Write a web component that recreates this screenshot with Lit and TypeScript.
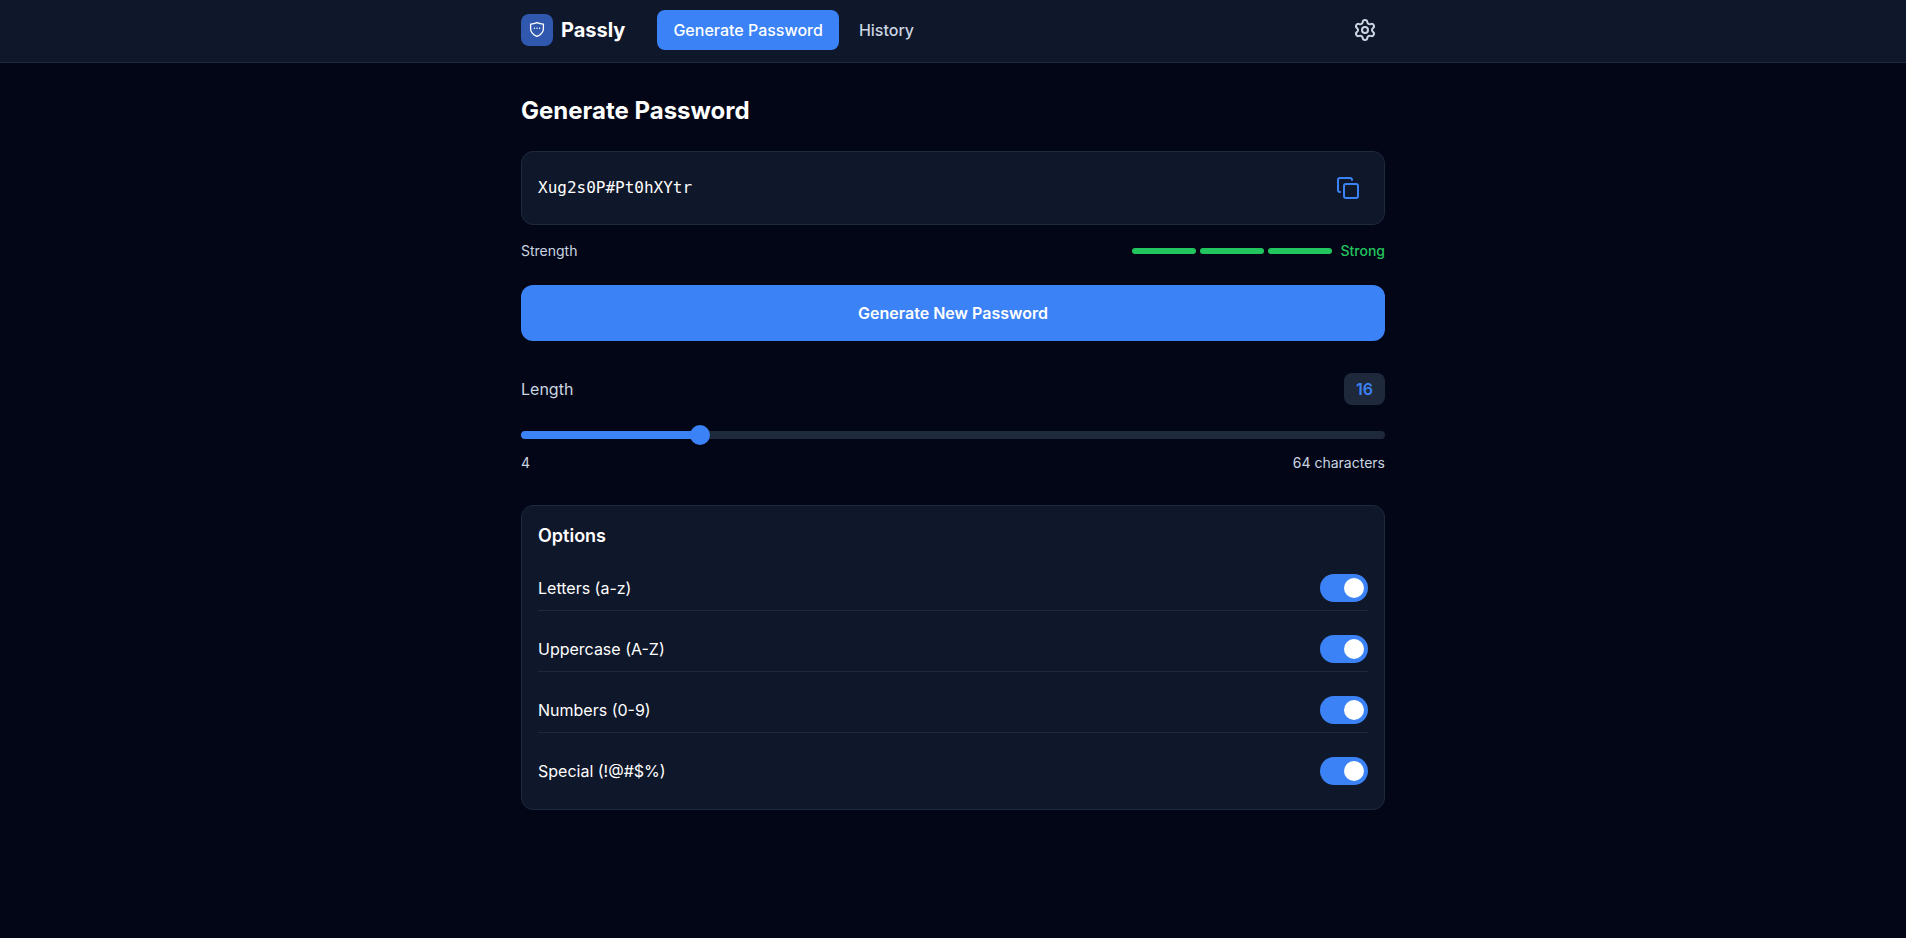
import { LitElement, html, css } from "lit";
import { customElement, state } from "lit/decorators.js";
import { classMap } from "lit/directives/class-map.js";
import { styleMap } from "lit/directives/style-map.js";

interface CharOption {
  id: string;
  label: string;
  on: boolean;
}

@customElement("app-root")
export class AppRoot extends LitElement {
  static styles = css`
    :host {
      display: block;
      min-height: 100vh;
      background: #020617;
      color: #ffffff;
      font-family: Inter, sans-serif;
      font-size: 16px;
      line-height: 24px;
    }
    * {
      box-sizing: border-box;
    }
    h1,
    h2 {
      margin: 0;
    }
    button {
      font: inherit;
      border: 0;
      cursor: pointer;
    }
    .bar {
      background: #0f172a;
      border-bottom: 1px solid #1e293b;
    }
    .wrap {
      max-width: 896px;
      margin: 0 auto;
      padding: 0 16px;
    }
    .bar-row {
      display: flex;
      align-items: center;
      justify-content: space-between;
      padding-top: 10px;
      padding-bottom: 12px;
    }
    .left {
      display: flex;
      align-items: center;
      gap: 32px;
    }
    .brand {
      display: flex;
      align-items: center;
      gap: 8px;
      font-size: 20px;
      line-height: 28px;
      font-weight: 700;
      color: inherit;
      text-decoration: none;
    }
    .logo {
      display: block;
      width: 32px;
      height: 32px;
    }
    .nav {
      display: flex;
      gap: 4px;
    }
    .tab {
      padding: 8px 16px;
      border-radius: 8px;
      font-weight: 500;
      color: #cbd5e1;
      text-decoration: none;
    }
    .tab.active {
      background: #3b82f6;
      color: #ffffff;
    }
    .icon-btn {
      display: flex;
      padding: 8px;
      border-radius: 8px;
      background: transparent;
      color: #cbd5e1;
    }
    .icon-btn.accent {
      color: #3b82f6;
    }
    .icon {
      width: 24px;
      height: 24px;
      fill: none;
      stroke: currentColor;
      stroke-width: 2;
      stroke-linecap: round;
      stroke-linejoin: round;
    }
    .main {
      padding-top: 32px;
      padding-bottom: 32px;
    }
    .title {
      font-size: 24px;
      line-height: 32px;
      font-weight: 700;
      margin-bottom: 24px;
    }
    .card {
      background: #0f172a;
      border: 1px solid #1e293b;
      border-radius: 12px;
      padding: 16px;
    }
    .row {
      display: flex;
      align-items: center;
      justify-content: space-between;
    }
    .password {
      font-family: Consolas, "DejaVu Sans Mono", monospace;
      font-size: 16px;
      line-height: 28px;
    }
    .strength {
      margin: 16px 0 24px;
      font-size: 14px;
      line-height: 20px;
      color: #cbd5e1;
    }
    .meter {
      display: flex;
      align-items: center;
      gap: 8px;
      font-weight: 500;
      color: #22c55e;
    }
    .segments {
      display: flex;
      gap: 4px;
    }
    .segment {
      width: 64px;
      height: 6px;
      border-radius: 3px;
      background: #22c55e;
    }
    .generate {
      display: block;
      width: 100%;
      padding: 16px;
      border-radius: 12px;
      background: #3b82f6;
      color: #ffffff;
      font-weight: 600;
    }
    .length {
      margin: 32px 0;
      color: #cbd5e1;
    }
    .count {
      padding: 4px 12px;
      border-radius: 8px;
      background: #1e293b;
      color: #3b82f6;
      font-weight: 600;
    }
    .range {
      appearance: none;
      display: block;
      width: 100%;
      height: 20px;
      margin: 20px 0 8px;
      background: transparent;
      cursor: pointer;
    }
    .range::-webkit-slider-runnable-track {
      height: 8px;
      border-radius: 4px;
      background: linear-gradient(
        to right,
        #3b82f6 var(--fill),
        #1e293b var(--fill)
      );
    }
    .range::-webkit-slider-thumb {
      appearance: none;
      width: 20px;
      height: 20px;
      margin-top: -6px;
      border-radius: 50%;
      background: #3b82f6;
    }
    .limits {
      font-size: 14px;
      line-height: 20px;
    }
    .options {
      display: flex;
      flex-direction: column;
      gap: 16px;
    }
    .subtitle {
      font-size: 18px;
      line-height: 28px;
      font-weight: 600;
    }
    .option {
      padding: 8px 0;
      border-bottom: 1px solid #1e293b;
      cursor: pointer;
    }
    .option:last-child {
      border-bottom: 0;
    }
    .switch {
      appearance: none;
      display: flex;
      width: 48px;
      height: 28px;
      margin: 0;
      padding: 4px;
      border-radius: 14px;
      background: #334155;
      cursor: pointer;
    }
    .switch::before {
      content: "";
      width: 20px;
      height: 20px;
      border-radius: 50%;
      background: #ffffff;
    }
    .switch:checked {
      justify-content: flex-end;
      background: #3b82f6;
    }
  `;

  @state() private password = "Xug2s0P#Pt0hXYtr";
  @state() private length = 16;
  @state() private page = "Generate Password";
  @state() private options: CharOption[] = [
    { id: "letters", label: "Letters (a-z)", on: true },
    { id: "uppercase", label: "Uppercase (A-Z)", on: true },
    { id: "numbers", label: "Numbers (0-9)", on: true },
    { id: "special", label: "Special (!@#$%)", on: true },
  ];

  private generate() {
    const sets: Record<string, string> = {
      letters: "abcdefghijklmnopqrstuvwxyz",
      uppercase: "ABCDEFGHIJKLMNOPQRSTUVWXYZ",
      numbers: "0123456789",
      special: "!@#$%",
    };
    const pool = this.options
      .filter((o) => o.on)
      .map((o) => sets[o.id])
      .join("");
    if (!pool) return;
    const values = crypto.getRandomValues(new Uint32Array(this.length));
    this.password = Array.from(values, (v) => pool[v % pool.length]).join("");
  }

  private toggle(id: string) {
    this.options = this.options.map((o) =>
      o.id === id ? { ...o, on: !o.on } : o
    );
  }

  private renderTab(name: string) {
    return html`<a
      href="#"
      class=${classMap({ tab: true, active: this.page === name })}
      >${name}</a
    >`;
  }

  render() {
    const fill = `${((this.length - 4) / 60) * 100}%`;
    return html`
      <header class="bar">
        <div class="wrap">
          <div class="bar-row">
            <div class="left">
              <a class="brand" href="#">
                <svg class="logo" viewBox="0 0 32 32" aria-hidden="true">
                  <rect width="32" height="32" rx="8" fill="#3058ae" />
                  <path
                    d="M16 8.6c2 .9 4 1.400 6.400 1.500v4.600c0 3.600-2.500 6-6.400 7.700-3.900-1.700-6.400-4.100-6.400-7.700v-4.600C12 10 14 9.500 16 8.600z"
                    fill="none"
                    stroke="#ffffff"
                    stroke-width="1.3"
                    stroke-linejoin="round"
                  />
                  <circle cx="13.4" cy="14.3" r=".75" fill="#fff" />
                  <circle cx="16" cy="14.3" r=".75" fill="#fff" />
                  <circle cx="18.6" cy="14.3" r=".75" fill="#fff" />
                </svg>
                Passly
              </a>
              <nav class="nav">
                ${this.renderTab("Generate Password")}
                ${this.renderTab("History")}
              </nav>
            </div>
            <button class="icon-btn" aria-label="Settings">
              <svg class="icon" viewBox="0 0 24 24">
                <path
                  d="M9.671 4.136a2.34 2.34 0 0 1 4.659 0 2.34 2.34 0 0 0 3.319 1.915 2.34 2.34 0 0 1 2.33 4.033 2.34 2.34 0 0 0 0 3.831 2.34 2.34 0 0 1-2.33 4.033 2.34 2.34 0 0 0-3.319 1.915 2.34 2.34 0 0 1-4.659 0 2.34 2.34 0 0 0-3.32-1.915 2.34 2.34 0 0 1-2.33-4.033 2.34 2.34 0 0 0 0-3.831A2.34 2.34 0 0 1 6.35 6.051a2.34 2.34 0 0 0 3.319-1.915"
                />
                <circle cx="12" cy="12" r="3" />
              </svg>
            </button>
          </div>
        </div>
      </header>

      <main class="wrap">
        <div class="main">
          <h1 class="title">Generate Password</h1>

          <div class="card row">
            <output class="password">${this.password}</output>
            <button
              class="icon-btn accent"
              aria-label="Copy password"
              @click=${() => navigator.clipboard?.writeText(this.password)}
            >
              <svg class="icon" viewBox="0 0 24 24">
                <rect x="8" y="8" width="14" height="14" rx="2" />
                <path
                  d="M4 16c-1.1 0-2-.9-2-2V4c0-1.100.9-2 2-2h10c1.100 0 2 .9 2 2"
                />
              </svg>
            </button>
          </div>

          <div class="strength row">
            <span>Strength</span>
            <div class="meter">
              <div class="segments">
                <div class="segment"></div>
                <div class="segment"></div>
                <div class="segment"></div>
              </div>
              <span>Strong</span>
            </div>
          </div>

          <button class="generate" @click=${this.generate}>
            Generate New Password
          </button>

          <section class="length">
            <div class="row">
              <label for="length">Length</label>
              <output class="count" for="length">${this.length}</output>
            </div>
            <input
              id="length"
              class="range"
              type="range"
              min="4"
              max="64"
              .value=${String(this.length)}
              style=${styleMap({ "--fill": fill })}
              @input=${(e: Event) => {
                this.length = Number((e.target as HTMLInputElement).value);
              }}
            />
            <div class="limits row">
              <span>4</span>
              <span>64 characters</span>
            </div>
          </section>

          <section class="card options">
            <h2 class="subtitle">Options</h2>
            ${this.options.map(
              (o) => html`
                <label class="option row" for=${o.id}>
                  <span>${o.label}</span>
                  <input
                    id=${o.id}
                    class="switch"
                    type="checkbox"
                    .checked=${o.on}
                    @change=${() => this.toggle(o.id)}
                  />
                </label>
              `
            )}
          </section>
        </div>
      </main>
    `;
  }
}
